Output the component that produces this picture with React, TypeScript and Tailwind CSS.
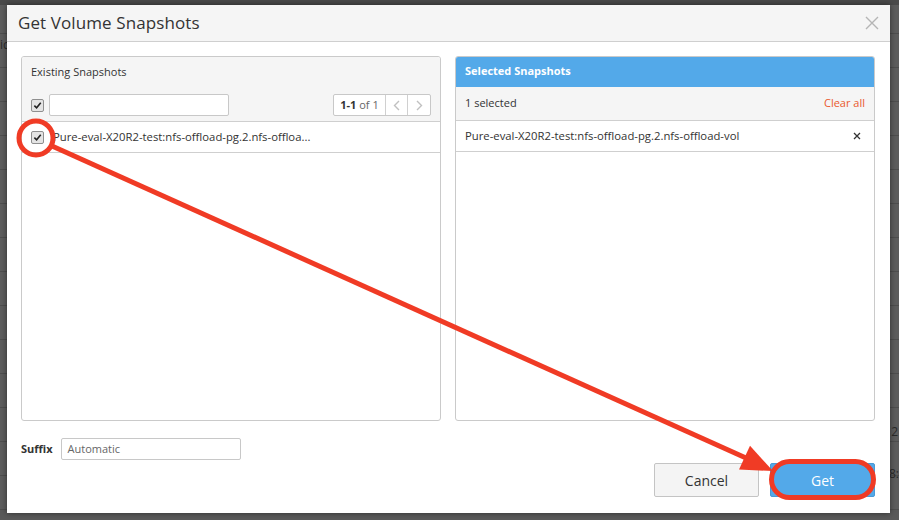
import React from "react";

const font = { fontFamily: '"Open Sans", "Liberation Sans", Arial, sans-serif' };

function Check({ className = "" }: { className?: string }) {
  return (
    <div className={"w-[13px] h-[13px] rounded-[2px] border border-[#8f8f8f] bg-[#e4e4e4] flex items-center justify-center " + className}>
      <svg width="9" height="9" viewBox="0 0 10 10">
        <path d="M1.5 5.2 L4 7.6 L8.6 2" stroke="#222" strokeWidth="1.8" fill="none" />
      </svg>
    </div>
  );
}

export default function App() {
  const bgRows = [0, 30, 72, 108, 160, 197, 230, 262, 290, 320, 366, 393, 425, 455, 487];
  return (
    <div className="relative w-[899px] h-[520px] overflow-hidden bg-[#5a5a5a]" style={font}>
      {/* background page rows */}
      <div className="flex flex-col">
        {bgRows.map((y, i) => (
          <div key={i} className="h-[34px] border-b border-[#4e4e4e] bg-[#5d5d5d]" />
        ))}
      </div>
      <div className="absolute left-0 top-0 w-full h-[5px] bg-[#4a4a4a]" />
      <div className="absolute right-[1px] top-[423px] text-[12px] text-[#2a2a2a]">2</div>
      <div className="absolute right-0 top-[465px] text-[12px] text-[#2a2a2a]">8:</div>
      <div className="absolute left-0 top-[36px] text-[12px] text-[#2a2a2a]">ic</div>

      {/* modal */}
      <div className="absolute left-[7px] top-[5px] w-[883px] h-[508px] bg-white shadow-[0_0_6px_rgba(0,0,0,0.5)] flex flex-col">
        <div className="h-[37px] bg-[#f5f5f5] border-b border-[#cfcfcf] flex items-center justify-between pl-[11px] pr-[10px]">
          <div className="text-[17px] text-[#333] tracking-[0.1px]">Get Volume Snapshots</div>
          <svg width="16" height="16" viewBox="0 0 16 16">
            <path d="M2 2 L14 14 M14 2 L2 14" stroke="#b5b5b5" strokeWidth="1.4" />
          </svg>
        </div>

        <div className="flex gap-[14px] pl-[14px] pt-[14px]">
          {/* left panel */}
          <div className="w-[420px] h-[365px] border border-[#cacaca] rounded-[3px] flex flex-col overflow-hidden">
            <div className="bg-[#f5f5f5] border-b border-[#cfcfcf] h-[65px] flex flex-col">
              <div className="h-[30px] flex items-center pl-[9px] text-[11px] text-[#333]">Existing Snapshots</div>
              <div className="flex items-center pl-[9px] pr-[9px] mt-[7px]">
                <Check />
                <div className="ml-[5px] w-[180px] h-[22px] bg-white border border-[#c8c8c8] rounded-[2px]" />
                <div className="ml-auto flex h-[22px] border border-[#c8c8c8] rounded-[2px] bg-white">
                  <div className="w-[52px] flex items-center justify-center text-[11px] text-[#666] border-r border-[#d0d0d0]">
                    <span className="font-bold text-[#333]">1-1</span>&nbsp;of 1
                  </div>
                  <div className="w-[22px] flex items-center justify-center border-r border-[#d0d0d0]">
                    <svg width="7" height="11" viewBox="0 0 7 11"><path d="M6 1 L1.5 5.5 L6 10" stroke="#c0c0c0" strokeWidth="1.4" fill="none" /></svg>
                  </div>
                  <div className="w-[22px] flex items-center justify-center">
                    <svg width="7" height="11" viewBox="0 0 7 11"><path d="M1 1 L5.5 5.5 L1 10" stroke="#c0c0c0" strokeWidth="1.4" fill="none" /></svg>
                  </div>
                </div>
              </div>
            </div>
            <div className="h-[31px] border-b border-[#cfcfcf] flex items-center pl-[9px]">
              <Check />
              <div className="ml-[9px] text-[11.3px] text-[#333]">Pure-eval-X20R2-test:nfs-offload-pg.2.nfs-offloa...</div>
            </div>
          </div>

          {/* right panel */}
          <div className="w-[420px] h-[365px] border border-[#cacaca] rounded-[3px] flex flex-col overflow-hidden">
            <div className="h-[31px] -mx-px -mt-px bg-[#53a9e9] flex items-center pl-[10px] text-[11px] font-bold text-white rounded-t-[3px]">Selected Snapshots</div>
            <div className="h-[34px] bg-[#f5f5f5] border-b border-[#cfcfcf] flex items-center justify-between pl-[9px] pr-[9px] text-[11px]">
              <span className="text-[#333]">1 selected</span>
              <span className="text-[#ea5a2d]">Clear all</span>
            </div>
            <div className="h-[31px] border-b border-[#cfcfcf] flex items-center justify-between pl-[9px] pr-[13px] text-[11.3px] text-[#333]">
              <span>Pure-eval-X20R2-test:nfs-offload-pg.2.nfs-offload-vol</span>
              <svg width="8" height="8" viewBox="0 0 8 8"><path d="M1 1 L7 7 M7 1 L1 7" stroke="#333" strokeWidth="1.3" /></svg>
            </div>
          </div>
        </div>

        <div className="flex items-center pl-[14px] mt-[17px]">
          <span className="text-[11px] font-bold text-[#333]">Suffix</span>
          <div className="ml-[8px] w-[180px] h-[22px] border border-[#c8c8c8] rounded-[2px] flex items-center pl-[6px] text-[11px] text-[#666]">Automatic</div>
        </div>

        <div className="flex justify-end gap-[11px] pr-[15px] mt-[3px]">
          <div className="w-[105px] h-[34px] bg-[#f4f4f4] border border-[#c4c4c4] rounded-[2px] flex items-center justify-center text-[14px] text-[#333]">Cancel</div>
          <div className="w-[105px] h-[34px] bg-[#53a9e9] border border-[#4a9ad6] rounded-[2px] flex items-center justify-center text-[14px] text-white">Get</div>
        </div>
      </div>

      {/* annotations */}
      <svg className="absolute left-0 top-0 pointer-events-none" width="899" height="520" viewBox="0 0 899 520">
        <circle cx="36" cy="138" r="17" stroke="#f03b25" strokeWidth="5" fill="none" />
        <line x1="52" y1="146" x2="746" y2="458" stroke="#f03b25" strokeWidth="5" />
        <polygon points="773,471 739,469.6 750,445.8" fill="#f03b25" />
        <rect x="771.5" y="461.5" width="102" height="36" rx="18" stroke="#f03b25" strokeWidth="5" fill="none" />
      </svg>
    </div>
  );
}
